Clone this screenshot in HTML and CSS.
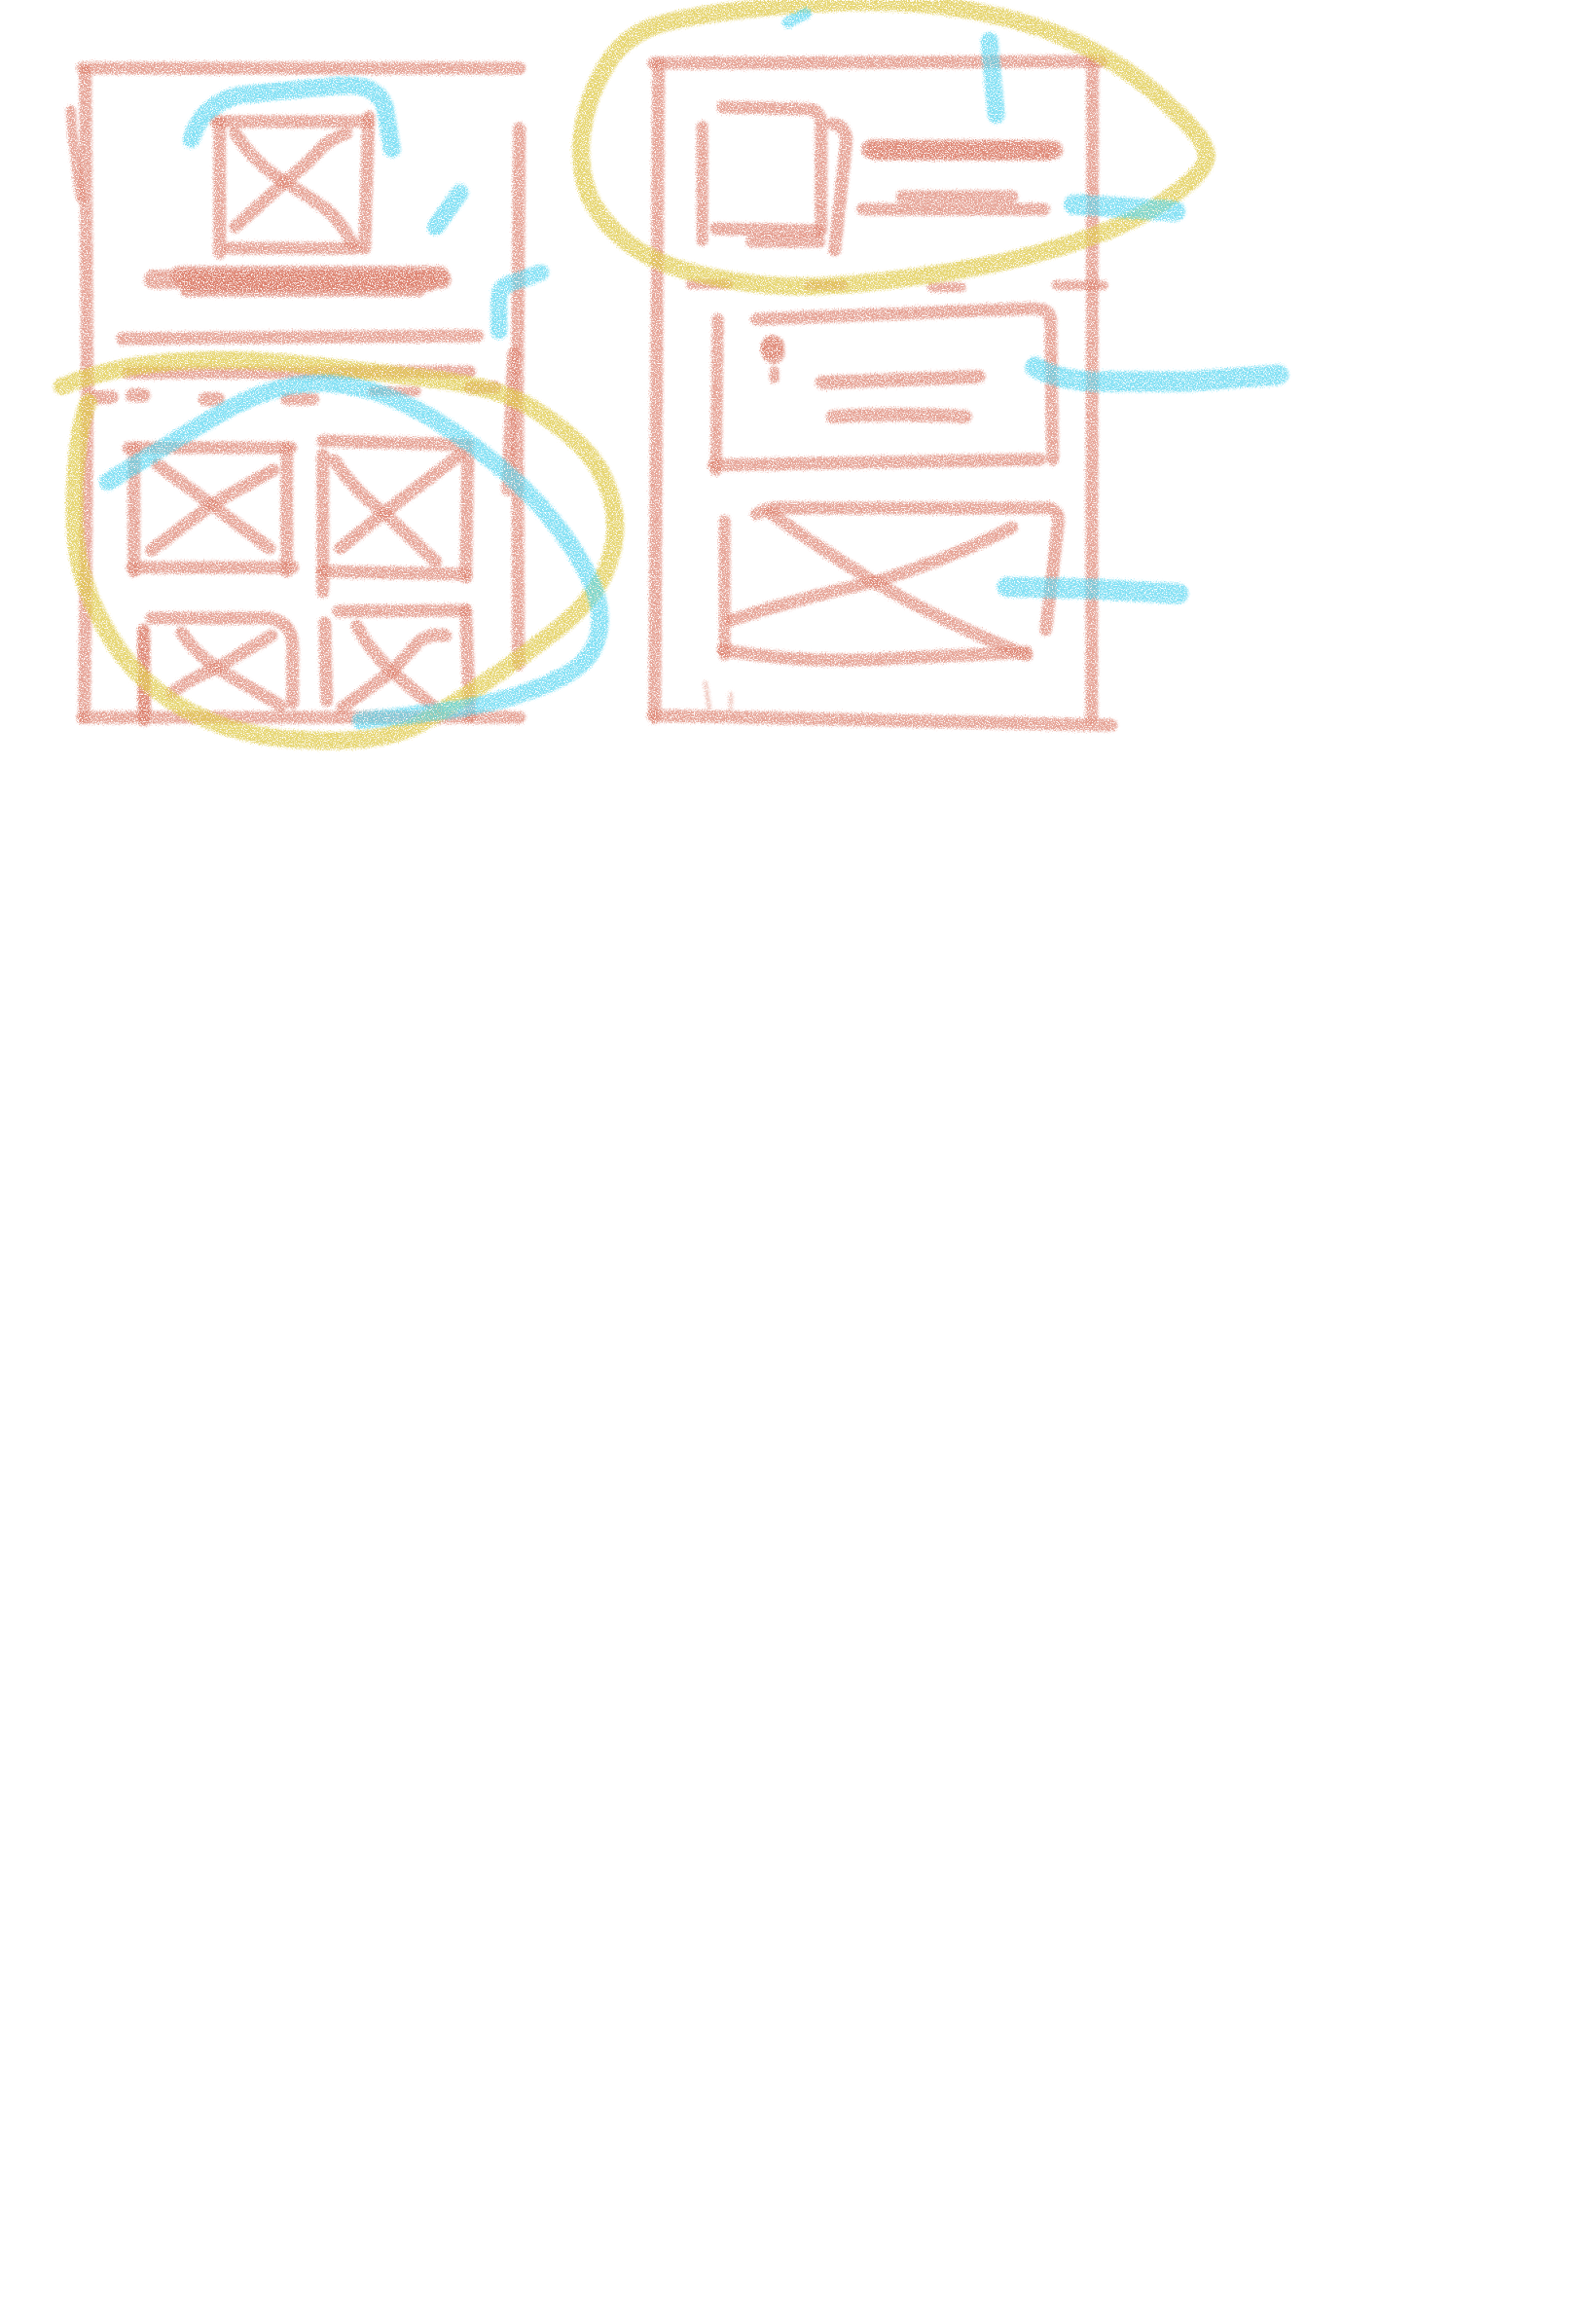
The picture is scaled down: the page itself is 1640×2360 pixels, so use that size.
FILE: index.html
```html
<!DOCTYPE html>
<html lang="en">
<head>
  <meta charset="UTF-8">
  <title>Wireframe sketch</title>
  <link rel="stylesheet" href="styles.css">
</head>
<body>
  <svg class="sketch" viewBox="0 0 1640 2360" xmlns="http://www.w3.org/2000/svg">
    <defs>
      <filter id="chalk" filterUnits="userSpaceOnUse" x="0" y="0" width="1640" height="900">
        <feTurbulence type="fractalNoise" baseFrequency="0.75" numOctaves="3" seed="7" result="noise"/>
        <feGaussianBlur in="SourceGraphic" stdDeviation="1" result="soft"/>
        <feDisplacementMap in="soft" in2="noise" scale="7" xChannelSelector="R" yChannelSelector="G" result="rough"/>
        <feColorMatrix in="noise" type="matrix" values="0 0 0 0 0  0 0 0 0 0  0 0 0 0 0  3.6 0 0 0 -0.95" result="grain"/>
        <feComposite in="rough" in2="grain" operator="in"/>
      </filter>
    </defs>

    <!-- left screen -->
    <g class="layer pink">
      <path d="M85 70 L534 70"/>
      <path d="M88 72 L90 400 L87 737"/>
      <path class="thin" d="M73 113 L75 140 L83 203"/>
      <path d="M534 132 L532 400 L533 683"/>
      <path d="M528 363 L522 503"/>
      <path d="M85 737 L534 737"/>

      <path d="M222 125 L379 125"/>
      <path d="M226 125 L226 260"/>
      <path d="M379 120 L375 255"/>
      <path d="M236 255 L366 255"/>
      <path d="M242 137 Q262 168 293 187 Q320 203 338 217 Q352 230 362 250"/>
      <path d="M356 137 Q338 142 325 158 Q312 172 293 187 Q268 210 242 233"/>

      <path class="bold" d="M158 287 L454 287"/>
      <path class="bold" d="M185 283 L452 283"/>
      <path class="bold" d="M195 290 L440 290"/>
      <path class="heavy" d="M192 298 L430 298"/>
      <path d="M126 348 L491 345"/>
      <path d="M132 383 L483 382"/>
      <path d="M483 398 L509 398"/>
      <path class="thin" d="M383 402 L428 402"/>
      <path class="heavy" d="M98 408 L115 408"/>
      <path class="heavy" d="M136 406 L148 406"/>
      <path class="heavy" d="M211 410 L224 410"/>
      <path d="M295 410 L322 410"/>

      <path d="M132 460 L299 460"/>
      <path d="M138 460 L138 587"/>
      <path d="M295 460 L295 587"/>
      <path d="M136 583 L301 583"/>
      <path d="M162 477 L277 563"/>
      <path d="M281 483 L220 517 L156 565"/>

      <path d="M332 453 L481 457"/>
      <path d="M332 467 L332 608"/>
      <path d="M481 467 L479 593"/>
      <path d="M332 587 L479 590"/>
      <path d="M344 473 Q365 505 395 527 L448 577"/>
      <path d="M473 467 L395 527 L350 563"/>

      <path d="M156 635 L273 635 Q301 637 301 665 L301 722"/>
      <path d="M148 647 L148 740"/>
      <path d="M148 650 L149 735"/>
      <path d="M187 650 Q200 670 224 687 L289 725"/>
      <path d="M279 653 L222 687 Q195 697 177 712"/>

      <path d="M348 628 L479 627"/>
      <path d="M479 627 L483 737"/>
      <path d="M334 640 L336 720"/>
      <path d="M367 643 Q380 668 403 690 L448 728"/>
      <path d="M458 653 Q442 650 430 660 L403 690 L352 727"/>
    </g>

    <!-- right screen -->
    <g class="layer pink">
      <path d="M672 65 L1132 63"/>
      <path d="M677 65 L673 737"/>
      <path d="M1123 63 L1122 737"/>
      <path d="M671 735 L1142 745"/>

      <path d="M743 110 L830 112 Q844 113 844 128 L844 237"/>
      <path class="taper" d="M722 130 L722 247"/>
      <path d="M736 235 L840 237"/>
      <path d="M773 248 L842 248"/>
      <path d="M856 127 Q870 130 870 145 L858 257"/>

      <path class="bold" d="M895 153 L1083 154"/>
      <path class="bold" d="M900 155 L1078 155"/>
      <path d="M927 202 L1040 202"/>
      <path d="M887 215 L1073 215"/>

      <path class="thin" d="M710 292 L748 292"/>
      <path class="thin" d="M831 293 L866 293"/>
      <path class="thin" d="M958 295 L988 295"/>
      <path class="thin" d="M1086 293 L1134 293"/>

      <path d="M778 328 L1060 317 Q1080 316 1080 330 L1082 472"/>
      <path class="taper" d="M738 328 L736 483"/>
      <path d="M734 478 L1069 472"/>
      <path class="dot" d="M794 358 L795 362"/>
      <path class="dot" d="M794 356 L794 358"/>
      <path class="thin" d="M796 381 L796 389"/>
      <path class="heavy" d="M845 393 L1006 387"/>
      <path class="heavy" d="M856 428 Q920 424 992 428"/>

      <path d="M778 528 Q790 521 805 522 L1075 522 Q1088 523 1088 535 L1075 647"/>
      <path class="taper" d="M745 535 L745 673"/>
      <path d="M743 668 Q830 682 908 677 L1055 670"/>
      <path d="M792 527 Q845 565 899 598 Q970 640 1055 673"/>
      <path d="M1040 542 Q975 575 899 598 Q830 612 752 637"/>

      <path class="hair" d="M725 702 L729 727"/>
      <path class="hair" d="M751 713 L751 727"/>
    </g>

    <g class="layer yellow">
      <path d="M64 397 Q113 377 174.500 372 Q236 367 301 373.500 Q366 380 437.500 388.500 Q509 397 540 415 Q571 433 595.500 456.500 Q620 480 629 513.500 Q638 547 624.500 582 Q611 617 570.500 648.500 Q530 680 493 705 Q456 730 431.500 743.500 Q407 757 366.500 760 Q326 763 285 758 Q244 753 209.500 738 Q175 723 148.500 698 Q122 673 103.500 636.500 Q85 600 80 568.500 Q75 537 78 487 Q81 437 91 413"/>
      <path d="M668.500 28.500 Q698 17 769 9.500 Q840 2 899 2 Q958 2 1017 14.500 Q1076 27 1123 52 Q1170 77 1203 110 Q1240 143 1240 160 Q1240 177 1203 202 Q1170 227 1111 247 Q1052 267 981 278.500 Q910 290 851 293.500 Q792 297 733 285 Q674 273 643.500 248 Q613 223 603.500 195 Q594 167 599 133.500 Q604 100 621.500 70 Q639 40 668.500 28.500 Z"/>
    </g>

    <g class="layer cyan">
      <path d="M197 143 Q205 120 216 113 Q230 100 252 97 L350 88 Q387 85 396 110 L403 153"/>
      <path d="M473 198 L448 233"/>
      <path class="narrow" d="M556 280 L520 293 Q512 298 513 310 L513 340"/>
      <path d="M111 495 Q183 450 223.500 426.500 Q264 403 299 396.500 Q334 390 370.500 398.500 Q407 407 448 432 Q489 457 525.500 490 Q562 523 586.500 560 Q611 597 615.500 622 Q620 647 609.500 667 Q599 687 564.500 702 Q530 717 489 725 Q448 733 371 740"/>
      <path d="M1017 42 L1024 118"/>
      <path class="small" d="M810 23 L828 14"/>
      <path class="wide" d="M1104 210 L1208 217"/>
      <path class="wide" d="M1064 377 Q1090 392 1131 392 L1220 392 L1314 385"/>
      <path class="wide" d="M1035 603 L1122 605 L1211 610"/>
    </g>
  </svg>
</body>
</html>
```

FILE: styles.css
```css
:root {
  --pink: #dc7f6c;
  --yellow: #e0ca4c;
  --cyan: #58d6f0;
}

* {
  box-sizing: border-box;
  margin: 0;
  padding: 0;
}

body {
  background-color: #fff;
}

.sketch {
  display: block;
  width: 1640px;
  height: 2360px;
}

.layer {
  fill: none;
  stroke-linecap: round;
  stroke-linejoin: round;
  filter: url(#chalk);
}

.pink {
  stroke: var(--pink);
  stroke-opacity: 0.72;
  stroke-width: 13;
}

.yellow {
  stroke: var(--yellow);
  stroke-opacity: 0.8;
  stroke-width: 18;
}

.cyan {
  stroke: var(--cyan);
  stroke-opacity: 0.75;
  stroke-width: 18;
}

.bold { stroke-width: 20; }
.heavy { stroke-width: 14; }
.thin { stroke-width: 10; }
.taper { stroke-width: 12; }
.hair { stroke-width: 5; stroke-opacity: 0.4; }
.narrow { stroke-width: 17; }
.small { stroke-width: 12; }
.wide { stroke-width: 21; }
.dot { stroke-width: 24; }
```
